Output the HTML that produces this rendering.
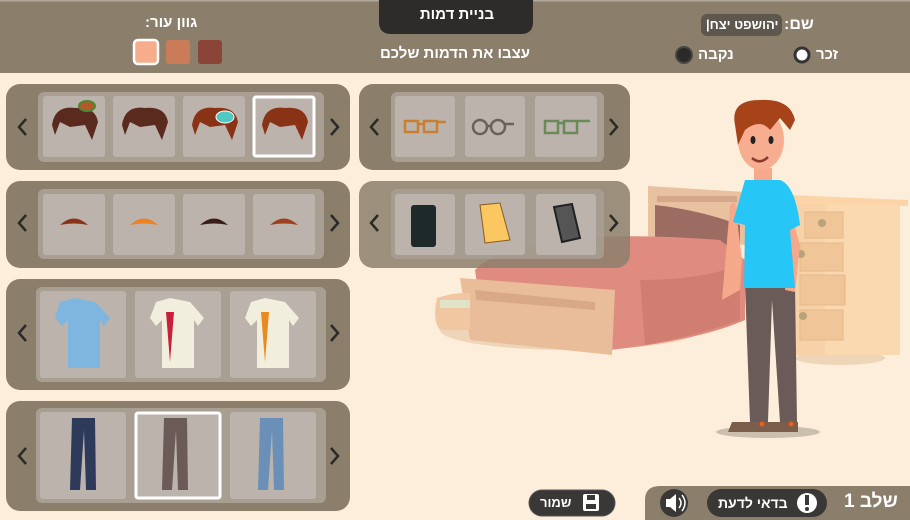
<!DOCTYPE html>
<html><head><meta charset="utf-8"><style>
body{margin:0;width:910px;height:520px;overflow:hidden;background:#fdeedb;font-family:"Liberation Sans","DejaVu Sans",sans-serif;position:relative}
.t{position:absolute;font-weight:bold;direction:rtl;white-space:nowrap}
svg{position:absolute;left:0;top:0}
</style></head><body>
<svg width="910" height="520" viewBox="0 0 910 520">
<!-- header -->
<rect x="0" y="0" width="910" height="73" fill="#8b7f6c"/>
<rect x="0" y="0" width="910" height="1.5" fill="#b0a898"/>
<path d="M379 0H533V22Q533 34 521 34H391Q379 34 379 22Z" fill="#2e2c2a"/>
<rect x="701" y="14" width="81" height="22" rx="6" fill="#5e574d"/>
<rect x="134" y="40" width="24" height="24" rx="4" fill="#f5ad8c" stroke="#fff" stroke-width="2.5"/>
<rect x="166" y="40" width="24" height="24" rx="3" fill="#c97c57"/>
<rect x="198" y="40" width="24" height="24" rx="3" fill="#8a4538"/>
<circle cx="802" cy="55" r="7" fill="#fff" stroke="#333" stroke-width="3"/>
<circle cx="684" cy="55" r="8" fill="#2c2a28" stroke="#4a4742" stroke-width="2"/>
<!-- bed -->
<ellipse cx="570" cy="330" rx="130" ry="20" fill="#efd5b8"/>
<path d="M648 186L745 192V245L648 240Z" fill="#e8c2a0"/>
<rect x="657" y="196" width="80" height="6" fill="#d4a888"/>
<path d="M655 205Q700 210 740 225L740 250L655 240Z" fill="#9c6b62"/>
<path d="M475 270Q520 225 720 240L745 260V320Q700 340 610 350L480 305Z" fill="#e08b80"/>
<path d="M640 280Q700 280 740 265V320Q700 335 645 345Z" fill="#d07d72"/>
<path d="M460 278L615 290L612 355L470 340Z" fill="#e9bd99"/>
<path d="M475 290L595 302V310L476 300Z" fill="#d9a987"/>
<path d="M437 298Q455 292 470 293V330H440Q432 320 437 298Z" fill="#f0c7a0"/>
<path d="M440 300H470V308H440Z" fill="#dfe3c8"/>
<!-- dresser -->
<ellipse cx="840" cy="358" rx="45" ry="7" fill="#efd5b8"/>
<path d="M790 195L908 200V206H790Z" fill="#fbd4a8"/>
<rect x="795" y="205" width="30" height="150" fill="#f7d2a8"/>
<rect x="825" y="205" width="75" height="150" fill="#fbd9b0"/>
<rect x="805" y="212" width="38" height="26" fill="#f0c698" stroke="#e6b887"/>
<rect x="800" y="243" width="43" height="28" fill="#f0c698" stroke="#e6b887"/>
<rect x="800" y="275" width="45" height="30" fill="#f0c698" stroke="#e6b887"/>
<rect x="800" y="310" width="43" height="30" fill="#f0c698" stroke="#e6b887"/>
<circle cx="822" cy="223" r="4" fill="#b8a37a"/><circle cx="801" cy="254" r="4" fill="#b8a37a"/><circle cx="803" cy="316" r="4" fill="#b8a37a"/>
<!-- character -->
<ellipse cx="768" cy="432" rx="52" ry="6" fill="#cbbfae"/>
<path d="M745 285H795L797 422H780L772 300L768 422H750Z" fill="#6b5b58"/>
<path d="M732 422H770V432H728Z" fill="#7a5d4a"/><path d="M758 422H798V432H758Z" fill="#7a5d4a"/>
<circle cx="762" cy="424" r="2.5" fill="#f05a1a"/><circle cx="791" cy="424" r="2.5" fill="#f05a1a"/>
<path d="M735 202L742 260L740 290L722 300L730 205Z" fill="#f5a88a"/>
<path d="M790 210L800 245L795 292L785 290L788 245Z" fill="#f5a88a"/>
<path d="M754 168H772V184H754Z" fill="#f5a88a"/>
<path d="M745 180H780Q795 185 800 225L790 230L795 288H744L745 225L733 222Z" fill="#26c6f6"/>
<ellipse cx="761" cy="140" rx="23" ry="30" fill="#f7ae90"/>
<path d="M735 125Q730 100 760 100Q790 98 795 120L790 130L780 118L770 130Q760 118 745 130L738 145Z" fill="#a64318"/>
<ellipse cx="753" cy="140" rx="2.5" ry="4" fill="#222"/><ellipse cx="771" cy="140" rx="2.5" ry="4" fill="#222"/>
<path d="M752 158Q760 165 768 157" stroke="#8a3a2a" stroke-width="2.5" fill="none"/>
<!-- panels -->
<g fill="#8b7f6c">
<rect x="6" y="84" width="344" height="86" rx="14"/>
<rect x="359" y="84" width="271" height="86" rx="14"/>
<rect x="6" y="181" width="344" height="87" rx="14"/>
<rect x="359" y="181" width="271" height="87" rx="14" fill-opacity=".85"/>
<rect x="6" y="279" width="344" height="111" rx="14"/>
<rect x="6" y="401" width="344" height="110" rx="14"/>
</g>
<g fill="#a89f92">
<rect x="38" y="92" width="286" height="70" rx="6"/>
<rect x="391" y="92" width="213" height="70" rx="6"/>
<rect x="38" y="189" width="286" height="70" rx="6"/>
<rect x="391" y="189" width="213" height="70" rx="6" fill-opacity=".85"/>
<rect x="36" y="287" width="290" height="95" rx="6"/>
<rect x="36" y="408" width="290" height="95" rx="6"/>
</g>
<g fill="#bcb3ac">
<rect x="43" y="96" width="62" height="61" rx="3"/><rect x="113" y="96" width="62" height="61" rx="3"/><rect x="183" y="96" width="62" height="61" rx="3"/><rect x="254" y="97" width="60" height="59" rx="2" stroke="#fff" stroke-width="3"/>
<rect x="395" y="96" width="60" height="61" rx="3"/><rect x="465" y="96" width="60" height="61" rx="3"/><rect x="535" y="96" width="62" height="61" rx="3"/>
<rect x="43" y="194" width="62" height="61" rx="3"/><rect x="113" y="194" width="62" height="61" rx="3"/><rect x="183" y="194" width="62" height="61" rx="3"/><rect x="253" y="194" width="62" height="61" rx="3"/>
<rect x="395" y="194" width="60" height="61" rx="3"/><rect x="465" y="194" width="60" height="61" rx="3"/><rect x="536" y="194" width="60" height="61" rx="3"/>
<rect x="40" y="291" width="86" height="87" rx="3"/><rect x="135" y="291" width="86" height="87" rx="3"/><rect x="230" y="291" width="86" height="87" rx="3"/>
<rect x="40" y="412" width="86" height="87" rx="3"/><rect x="136" y="413" width="84" height="85" rx="2" stroke="#fff" stroke-width="3"/><rect x="230" y="412" width="86" height="87" rx="3"/>
</g>
<!-- arrows -->
<g stroke="#2c2a28" stroke-width="2.5" fill="none">
<path d="M26 119L19 127L26 135"/><path d="M331 119L338 127L331 135"/>
<path d="M378 119L371 127L378 135"/><path d="M610 119L617 127L610 135"/>
<path d="M26 215L19 223L26 231"/><path d="M331 215L338 223L331 231"/>
<path d="M378 215L371 223L378 231"/><path d="M610 215L617 223L610 231"/>
<path d="M26 325L19 333L26 341"/><path d="M331 325L338 333L331 341"/>
<path d="M26 448L19 456L26 464"/><path d="M331 448L338 456L331 464"/>
</g>
<!-- hair items -->
<g fill="#5a2a1e"><path d="M52 125Q55 105 75 108Q95 106 98 122L92 140L85 125L70 127L60 122L55 135Z"/><path d="M122 125Q125 105 145 108Q165 106 168 122L162 140L155 125L140 127L130 122L125 135Z"/></g>
<g fill="#8a3216"><path d="M192 125Q195 105 215 108Q235 106 238 122L232 140L225 125L210 127L200 122L195 135Z"/><path d="M262 125Q265 105 285 108Q305 106 308 122L302 140L295 125L280 127L270 122L265 135Z"/></g>
<ellipse cx="87" cy="106" rx="8" ry="5" fill="#b45a2a" stroke="#4a8a30" stroke-width="2"/>
<ellipse cx="225" cy="117" rx="9" ry="6" fill="#4fc8c4" stroke="#fff"/>
<!-- glasses -->
<g fill="none" stroke-width="2.5"><g stroke="#c88030"><rect x="405" y="121" width="13" height="11"/><rect x="424" y="121" width="13" height="11"/><path d="M418 124H424M437 122H446"/></g>
<g stroke="#6a605c"><circle cx="480" cy="127" r="7"/><circle cx="498" cy="127" r="7"/><path d="M487 126H491M505 124H514"/></g>
<g stroke="#6a8a5a"><rect x="545" y="121" width="13" height="12"/><rect x="564" y="121" width="13" height="12"/><path d="M558 123H564M577 121H590"/></g></g>
<!-- mustaches -->
<path d="M60 225Q74 212 88 225Q74 222 60 225Z" fill="#8a3216"/>
<path d="M130 225Q144 212 158 225Q144 222 130 225Z" fill="#f08020"/>
<path d="M200 225Q214 212 228 225Q214 222 200 225Z" fill="#3a1c18"/>
<path d="M270 225Q284 212 298 225Q284 222 270 225Z" fill="#a04020"/>
<!-- objects -->
<rect x="411" y="205" width="25" height="42" rx="3" fill="#1e2a2a"/>
<path d="M480 205L500 203L510 240L485 243Z" fill="#fbc760" stroke="#8a5a20"/>
<path d="M554 207L572 204L580 238L562 242Z" fill="#555" stroke="#222" stroke-width="2"/>
<!-- shirts -->
<path d="M60 302L75 298L95 302L110 318L104 326L100 320L100 368H68L68 320L62 326L55 318Z" fill="#7eb6e0"/>
<path d="M156 302L170 298L190 302L204 318L198 326L194 320L194 368H162L162 320L156 326L150 318Z" fill="#f2eedd"/>
<path d="M166 312L170 362L174 312Z" fill="#c8203a"/>
<path d="M251 302L265 298L285 302L299 318L293 326L289 320L289 368H257L257 320L251 326L245 318Z" fill="#f2eedd"/>
<path d="M261 312L265 362L269 312Z" fill="#e88a20"/>
<!-- pants -->
<path d="M72 418H95L96 490H86L84 430L80 490H70Z" fill="#2e3a5a"/>
<path d="M164 418H187L188 490H178L176 430L172 490H162Z" fill="#6b5b58"/>
<path d="M260 418H283L284 490H274L272 430L268 490H258Z" fill="#6a90b8"/>
<!-- bottom bar -->
<path d="M645 520V500Q645 486 660 486H910V520Z" fill="#8b7f6c"/>
<rect x="529" y="490" width="86" height="26" rx="13" fill="#3a3836" stroke="#555" stroke-width="1"/>
<rect x="707" y="489" width="120" height="28" rx="14" fill="#3a3836"/>
<circle cx="674" cy="503" r="14" fill="#3a3836"/>
<circle cx="807" cy="503" r="10" fill="#fff"/><rect x="805" y="495" width="4" height="10" fill="#3a3836"/><circle cx="807" cy="509" r="2" fill="#3a3836"/>
<path d="M666 499H670L676 494V512L670 507H666Z" fill="#fff"/><path d="M679 498Q683 503 679 508M682 495Q688 503 682 511" stroke="#fff" stroke-width="1.5" fill="none"/>
<rect x="583" y="494" width="16" height="17" rx="2" fill="#fff"/><rect x="587" y="495" width="8" height="5" fill="#3a3836"/><rect x="586" y="504" width="10" height="5" fill="#3a3836"/>
</svg>
<div class="t" style="left:413px;top:6px;width:88px;text-align:center;color:#fff;font-size:15px">בניית דמות</div>
<div class="t" style="left:370px;top:45px;width:170px;text-align:center;color:#fff;font-size:15px">עצבו את הדמות שלכם</div>
<div class="t" style="left:145px;top:14px;color:#fff;font-size:15px">גוון עור:</div>
<div class="t" style="left:784px;top:16px;color:#fff;font-size:16px">שם:</div>
<div class="t" style="left:706px;top:17px;color:#fff;font-size:13px">יהושפט יצח|</div>
<div class="t" style="left:816px;top:46px;color:#fff;font-size:15px">זכר</div>
<div class="t" style="left:698px;top:46px;color:#fff;font-size:15px">נקבה</div>
<div class="t" style="left:844px;top:491px;color:#fff;font-size:19px">שלב 1</div>
<div class="t" style="left:718px;top:495px;color:#fff;font-size:14px">בדאי לדעת</div>
<div class="t" style="left:540px;top:495px;color:#fff;font-size:13px">שמור</div>
</body></html>
